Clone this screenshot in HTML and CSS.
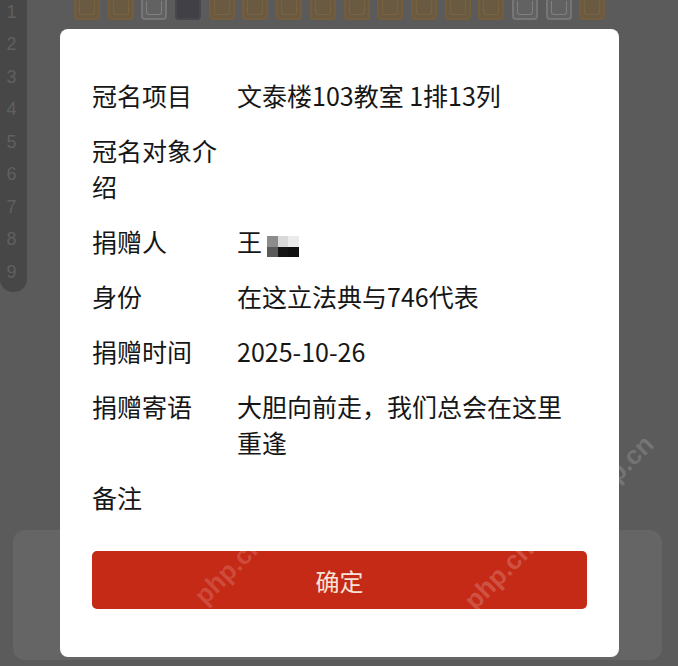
FILE: index.html
```html
<!DOCTYPE html>
<html lang="zh-CN">
<head>
<meta charset="utf-8">
<title>冠名详情</title>
<link rel="stylesheet" href="styles.css">
</head>
<body>
<div class="page">
  <div class="top">
    <div class="sidebar">
      <span>1</span><span>2</span><span>3</span><span>4</span><span>5</span><span>6</span><span>7</span><span>8</span><span>9</span>
    </div>
    <div class="seats">
      <i class="seat brown"></i><i class="seat brown"></i><i class="seat light"></i><i class="seat dark"></i>
      <i class="seat brown"></i><i class="seat brown"></i><i class="seat brown"></i><i class="seat brown"></i>
      <i class="seat brown"></i><i class="seat brown"></i><i class="seat brown"></i><i class="seat brown"></i>
      <i class="seat brown"></i><i class="seat light"></i><i class="seat light"></i><i class="seat brown"></i>
    </div>
  </div>
  <div class="bottom-card"></div>
</div>

<div class="modal">
  <div class="info">
    <div class="label">冠名项目</div><div class="value">文泰楼103教室 1排13列</div>
    <div class="label">冠名对象介绍</div><div class="value"></div>
    <div class="label">捐赠人</div><div class="value">王<span class="mask"><b class="m1"></b><b class="m2"></b><b class="m3"></b><b class="m4"></b><b class="m5"></b><b class="m6"></b></span></div>
    <div class="label">身份</div><div class="value">在这立法典与746代表</div>
    <div class="label">捐赠时间</div><div class="value">2025-10-26</div>
    <div class="label">捐赠寄语</div><div class="value">大胆向前走，我们总会在这里重逢</div>
    <div class="label">备注</div><div class="value"></div>
  </div>
  <button class="ok">确定</button>
</div>

<div class="wm w3">php.cn</div>
<div class="wm w4">php.cn</div>
<div class="wm w5">php.cn</div>
</body>
</html>
```
FILE: styles.css
```css
html, body {
  margin: 0;
  padding: 0;
}
body {
  width: 678px;
  height: 666px;
  overflow: hidden;
  background: #5b5b5b;
  font-family: "Noto Sans CJK SC", "Noto Sans", sans-serif;
  position: relative;
}
.page {
  display: flex;
  flex-direction: column;
}
.top {
  display: flex;
  align-items: flex-start;
}
.sidebar {
  width: 27px;
  height: 292px;
  background: #474747;
  border-radius: 0 0 13px 13px;
  display: flex;
  flex-direction: column;
  align-items: center;
  box-sizing: border-box;
}
.sidebar span {
  display: block;
  height: 33.5px;
  line-height: 24px;
  font-family: "Liberation Sans", sans-serif;
  font-size: 18px;
  color: #606060;
  margin-left: -4px;
}
.seats {
  display: flex;
  gap: 7.7px;
  padding-left: 47px;
  margin-top: -5px;
}
.seat {
  display: block;
  width: 26px;
  height: 25px;
  box-sizing: border-box;
  border-radius: 4px;
  border: 2px solid;
  position: relative;
}
.seat::after {
  content: "";
  position: absolute;
  left: 3px;
  right: 3px;
  top: 4px;
  bottom: 3px;
  border: 1.5px solid;
  border-top: none;
  border-radius: 0 0 3px 3px;
}
.seat.brown {
  background: #6a5a42;
  border-color: #735d3c;
}
.seat.brown::after { border-color: #7a6341; }
.seat.light {
  background: #626262;
  border-color: #767676;
}
.seat.light::after { border-color: #808080; }
.seat.dark {
  background: #404046;
  border-color: #47474c;
}
.seat.dark::after { border-color: #404046; }

.bottom-card {
  margin: 238px 16px 0 13px;
  height: 130px;
  background: #656565;
  border-radius: 12px;
}

.modal {
  position: absolute;
  left: 60px;
  top: 29px;
  width: 559px;
  height: 628px;
  box-sizing: border-box;
  background: #ffffff;
  border-radius: 8px;
  padding: 48px 32px 0 32px;
  display: flex;
  flex-direction: column;
}
.info {
  display: grid;
  grid-template-columns: 128px 1fr;
  column-gap: 17px;
  row-gap: 19px;
  font-size: 25px;
  line-height: 36px;
  color: #161616;
}
.value {
  padding-right: 12px;
  min-height: 36px;
}
.mask {
  display: inline-grid;
  grid-template-columns: repeat(3, 10.5px);
  grid-template-rows: repeat(2, 10.5px);
  vertical-align: top;
  margin-left: 5px;
  transform: translateY(13px);
}
.mask b { display: block; }
.m1 { background: #8c8c8c; }
.m2 { background: #d9d9d9; }
.m3 { background: #ebebeb; }
.m4 { background: #5a5a5a; }
.m5 { background: #161616; }
.m6 { background: #111111; }

.ok {
  margin-top: 36px;
  height: 58px;
  width: 100%;
  border: none;
  border-radius: 5px;
  background: #c52a17;
  color: #f6e2d6;
  font-family: "Noto Sans CJK SC", sans-serif;
  font-size: 24px;
  padding: 0;
}

.wm {
  position: absolute;
  font-family: "Liberation Sans", sans-serif;
  font-weight: bold;
  font-size: 26px;
  color: rgba(255, 255, 255, 0.16);
  transform: rotate(-45deg);
  transform-origin: left bottom;
  white-space: nowrap;
}
.w3 { left: 600px; top: 480px; }
.w4 { left: 210px; top: 580px; }
.w5 { left: 480px; top: 585px; color: rgba(255,255,255,0.2); }
```
